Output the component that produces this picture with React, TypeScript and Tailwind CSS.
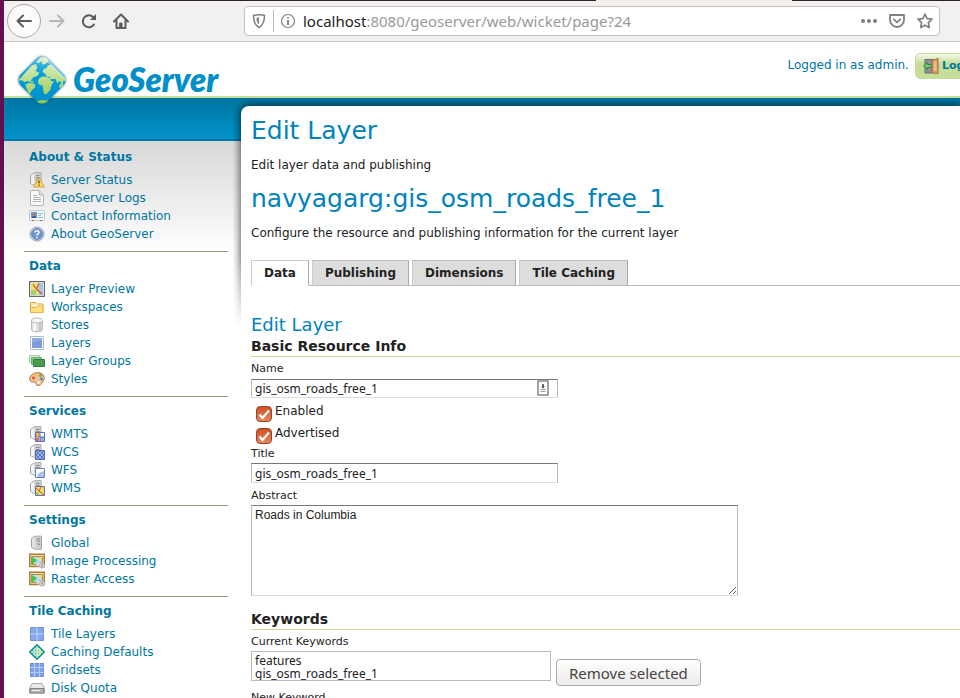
import React from 'react';

const SANS = "font-['DejaVu_Sans',Verdana,sans-serif]";
const UI = "font-['Noto_Sans',sans-serif]";

function Server({ children }: { children?: React.ReactNode }) {
  return (
    <>
      <path d="M1.500 3.500 5.500.7h6.500v12.800H5.500l-4-2z" fill="#e2e2e2" stroke="#a2a2a2" />
      <path d="M5.500 1.200h6v12h-6z" fill="#cdcdcd" />
      <path d="M2 3.800 5 1.700v11L2 11.200z" fill="#f4f4f4" />
      <path d="M7 3.500h3.500M7 5.500h3.500M7 7.500h3.500" stroke="#8d8d8d" />
      {children}
    </>
  );
}

function Picture() {
  return (
    <>
      <path d="M.7 1.200h14.600v12.300H.7z" fill="#f3e3b0" stroke="#a77f38" strokeWidth="1.400" />
      <path d="M2.500 3.500h11v8h-11z" fill="#b7dcf8" stroke="#b08c45" />
      <path d="m3 4 5 3-4 4H3z" fill="#45c63c" />
      <path d="M9 4h4v2.500H9z" fill="#f5d96a" />
      <circle cx="9.500" cy="11" r="2.200" fill="#e3e3e3" stroke="#bdbdbd" />
      <circle cx="13" cy="12.500" r="2.500" fill="#dedede" stroke="#b0b0b0" />
      <circle cx="13" cy="12.500" r="1" fill="#a08a80" />
    </>
  );
}

const glyphs: Record<string, React.ReactNode> = {
  status: (
    <Server>
      <path d="M10 5.500 15.300 15H4.700z" fill="#ffdc68" stroke="#d0a040" strokeLinejoin="round" />
      <path d="M10 8.500v3M10 12.500v1.300" stroke="#6b4a12" strokeWidth="1.400" />
    </Server>
  ),
  logs: (
    <>
      <path d="M1.500.5H10L14.500 5v10.500h-13z" fill="#fafafa" stroke="#b5b5b5" />
      <path d="M10 .5V5h4.500" fill="#ddd" stroke="#b5b5b5" />
      <path d="M4 5.500h4M4 7.500h8M4 9.500h8M4 11.500h8" stroke="#b4b4b4" />
    </>
  ),
  contact: (
    <>
      <path d="M.5 2.500h15v10H.5z" fill="#f4f6f8" stroke="#c4c9ce" />
      <path d="M2 4h6v6H2z" fill="#5f9fe0" />
      <circle cx="5" cy="6.300" r="1.500" fill="#c77a3b" />
      <path d="M3 10c0-3 4-3 4 0z" fill="#2a5cab" />
      <path d="M9.500 5.500H14M9.500 7.500H12M9.500 9.500H14" stroke="#8fb4da" />
      <path d="M3 12.500h2m6 0h2" stroke="#777" />
    </>
  ),
  about: (
    <>
      <circle cx="8" cy="8" r="7" fill="#d5deed" stroke="#94a5c2" />
      <circle cx="8" cy="8" r="5.400" fill="#6f93cb" stroke="#5f83ba" />
      <path d="M6 6.500C6 4 10 4 10 6.500 10 8 8 7.800 8 9.500M8 10.800v1.400" stroke="#fff" strokeWidth="1.500" fill="none" />
    </>
  ),
  preview: (
    <>
      <path d="M.6.6h14.800v14.800H.6z" fill="#fff" stroke="#5d6b62" strokeWidth="1.200" />
      <path d="M2 2h12v12H2z" fill="#f2df78" />
      <path d="M9.500 2H14v12H9.500z" fill="#a4c6ea" />
      <path d="M2 9h5v5H2z" fill="#9fd06a" />
      <path d="m4 3 3.500 5L13 13M7.500 8 10 2.500" stroke="#d9532a" strokeWidth="1.200" fill="none" />
    </>
  ),
  folder: (
    <>
      <path d="M1.500 13.500v-10h5l1 1.500h6.500v8.500z" fill="#fbe7a2" stroke="#dfa83f" />
      <path d="M3 6.500h10" stroke="#fffbe6" strokeWidth="1.500" />
      <path d="M1.500 13.500v-5h6l1-1.500H14v6.500z" fill="#ffe07a" stroke="#e5b14c" />
    </>
  ),
  store: (
    <>
      <path d="M2.500 3.500v9c0 3 11 3 11 0v-9" fill="#dedede" stroke="#b8b8b8" />
      <path d="M4.500 5v9h2.500V5" fill="#fafafa" />
      <path d="M10 5v9h2V5" fill="#c4c4c4" />
      <ellipse cx="8" cy="3.500" rx="5.500" ry="2.500" fill="#f6f6f6" stroke="#bcbcbc" />
    </>
  ),
  layer: (
    <>
      <path d="M1.500 1.500h13v13h-13z" fill="#fff" stroke="#a9bce0" />
      <path d="M3 3h10v10H3z" fill="#8dabe2" />
      <path d="M3 13V8l10-3v8z" fill="#7b9cd8" />
    </>
  ),
  group: (
    <>
      <path d="M.5 2.500h10v7H.5z" fill="#d4ebd4" stroke="#a8cfa9" />
      <path d="M2.500 4.500h10v7h-10z" fill="#8cc78f" stroke="#6db171" />
      <path d="M4.500 6.500h11v7h-11z" fill="#4a9a51" stroke="#347c3c" />
    </>
  ),
  styles: (
    <>
      <path d="M1 6C4 0 14 .500 15 5.500c1 4-3 9-6 9-3 0-1-4-4-3.500C1 11.500 0 9 1 6z" fill="#f0c295" stroke="#b5733f" />
      <circle cx="4.500" cy="7" r="1.400" fill="#e0432c" />
      <circle cx="7.500" cy="4" r="1.400" fill="#f1c13a" />
      <circle cx="11.500" cy="4.500" r="1.400" fill="#55b24a" />
      <circle cx="12.500" cy="8" r="1.400" fill="#4a86d0" />
      <circle cx="9.500" cy="11.500" r="1.300" fill="#fff" />
    </>
  ),
  wmts: (
    <Server>
      <path d="M6.500 6.500h9v9h-9z" fill="#fff" stroke="#5c6fae" />
      <path d="M7 7h4v4H7z" fill="#f1b44a" />
      <path d="M11 11h4v4h-4z" fill="#8faee5" />
      <path d="M7 12h3v3H7z" fill="#e07152" />
      <path d="M11 7v8M7 11h8" stroke="#5c6fae" />
    </Server>
  ),
  wcs: (
    <Server>
      <path d="M6.500 6.500h9v9h-9z" fill="#9db5ea" stroke="#5268b4" />
      <path d="m7 7 8 8M11 7l4 4M7 11l4 4M15 7l-8 8M11 7l-4 4M15 11l-4 4" stroke="#4a66b8" strokeWidth=".8" />
    </Server>
  ),
  wfs: (
    <Server>
      <path d="M6.500 6.500h9v9h-9z" fill="#fff" stroke="#6a80c0" />
      <path d="M8 15c1-4 3-5 7-6v6z" fill="#a9c3ee" />
    </Server>
  ),
  wms: (
    <Server>
      <path d="M6.500 6.500h9v9h-9z" fill="#f3dc70" stroke="#6a6fb0" />
      <path d="M7 12h3v3H7z" fill="#a3cf6c" />
      <path d="m7 8 3 3 5 4M10 11l2-4" stroke="#d4502a" fill="none" />
    </Server>
  ),
  server: (
    <>
      <path d="M2.500 3.500 6 1.200h6.500v13H6l-3.500-2z" fill="#e2e2e2" stroke="#a2a2a2" />
      <path d="M6.500 1.700H12v12H6.500z" fill="#cdcdcd" />
      <path d="M7.500 4h3.500M7.500 6h3.500" stroke="#8d8d8d" />
      <path d="M9 8.500h1.500V10H9z" fill="#36a63c" />
    </>
  ),
  picture: <Picture />,
  tiles: (
    <>
      <path d="M1 1h14v14H1z" fill="#86a8ea" />
      <path d="M1.500 1.500h13v13h-13z" stroke="#7294d8" fill="none" />
      <path d="M8 1v14M1 8h14" stroke="#bed1f8" />
    </>
  ),
  defaults: (
    <>
      <path d="m8 .7 7.300 7.300L8 15.300.7 8z" fill="#4dbfae" stroke="#168a86" strokeWidth="1.400" strokeLinejoin="round" />
      <path d="M8 2.500 13.500 8 8 13.500z" fill="#9ed27a" />
      <path d="M8 2v12M2 8h12M5 5v6M11 5v6M5 5h6M5 11h6" stroke="#e6f7e2" />
    </>
  ),
  grid: (
    <>
      <path d="M1 1h14v14H1z" fill="#7fa2e6" />
      <path d="M1.500 1.500h13v13h-13z" stroke="#6d90d6" fill="none" />
      <path d="M5.500 1v14M10.500 1v14M1 5.500h14M1 10.500h14" stroke="#b5cbf6" />
    </>
  ),
  disk: (
    <>
      <path d="M3 3.500h10l2.500 5V13H.5V8.500z" fill="#e9e9e9" stroke="#ababab" strokeLinejoin="round" />
      <path d="M1 8.500h14V13H1z" fill="#b3b3b3" stroke="#828282" />
      <path d="M3 10.500h8" stroke="#eee" />
    </>
  ),
};

function Glyph({ name }: { name: string }) {
  return (
    <svg viewBox="0 0 16 16" fill="none" className="size-4 shrink-0" aria-hidden="true">
      {glyphs[name]}
    </svg>
  );
}

const menu: { title: string; items: [string, string][] }[] = [
  { title: 'About & Status', items: [['status', 'Server Status'], ['logs', 'GeoServer Logs'], ['contact', 'Contact Information'], ['about', 'About GeoServer']] },
  { title: 'Data', items: [['preview', 'Layer Preview'], ['folder', 'Workspaces'], ['store', 'Stores'], ['layer', 'Layers'], ['group', 'Layer Groups'], ['styles', 'Styles']] },
  { title: 'Services', items: [['wmts', 'WMTS'], ['wcs', 'WCS'], ['wfs', 'WFS'], ['wms', 'WMS']] },
  { title: 'Settings', items: [['server', 'Global'], ['picture', 'Image Processing'], ['picture', 'Raster Access']] },
  { title: 'Tile Caching', items: [['tiles', 'Tile Layers'], ['defaults', 'Caching Defaults'], ['grid', 'Gridsets'], ['disk', 'Disk Quota']] },
];

function BrowserBar() {
  return (
    <div className={`shrink-0 bg-[#f3f1f0] ${UI}`}>
      <div className="flex h-px">
        <span className="w-[592px] bg-[#2c2528]" />
        <span className="w-[196px]" />
        <span className="flex-1 bg-[#2c2528]" />
      </div>
      <div className="flex h-[41px] items-center border-b border-[#c9c5c2] pr-5">
        <button aria-label="Back" className="ml-[3px] flex size-[34px] items-center justify-center rounded-full border border-[#adaaa8] bg-[#fbfbfb]">
          <svg viewBox="0 0 16 16" className="size-4" fill="none" stroke="#5b5b5b" strokeWidth="2" strokeLinecap="round" strokeLinejoin="round"><path d="M15 8H1.500M7 2.500 1.500 8 7 13.500" /></svg>
        </button>
        <button aria-label="Forward" className="ml-2 flex size-4 items-center justify-center">
          <svg viewBox="0 0 16 16" className="size-4" fill="none" stroke="#b9b7b6" strokeWidth="2" strokeLinecap="round" strokeLinejoin="round"><path d="M1 8h13.500M9 2.500 14.500 8 9 13.500" /></svg>
        </button>
        <button aria-label="Reload" className="ml-4 size-4">
          <svg viewBox="0 0 16 16" className="size-4" fill="none" stroke="#5b5b5b" strokeWidth="2" strokeLinecap="round"><path d="M13 11.500A6 6 0 1 1 12.500 4.500" /><path d="M15 1v6H9z" fill="#5b5b5b" stroke="none" /></svg>
        </button>
        <button aria-label="Home" className="ml-4 size-4">
          <svg viewBox="0 0 16 16" className="size-4" fill="none" stroke="#5b5b5b" strokeWidth="2" strokeLinecap="round" strokeLinejoin="round"><path d="M1 8.500 8 1.500l7 7M3.500 7.500V15h9V7.500" /><path d="M7 10h2v4H7z" strokeWidth="1" fill="#5b5b5b" /></svg>
        </button>
        <div className="ml-[115px] flex h-[30px] min-w-0 flex-1 items-center rounded border border-[#c6c1bd] bg-white px-1.5">
          <svg viewBox="0 0 16 16" className="size-4 shrink-0" fill="none" stroke="#808080" strokeWidth="1.500"><path d="M2.500 2.500 8 1.500l5.500 1c0 5.500-1 9.500-5.500 12-4.500-2.500-5.500-6.500-5.500-12z" /><path d="M8 4.500c-1 0-2 .3-2.500.5 0 3 .5 5 2.500 6.500z" fill="#808080" stroke="none" /></svg>
          <span className="mx-[6px] h-[22px] w-px bg-[#bbb]" />
          <svg viewBox="0 0 16 16" className="size-4 shrink-0" fill="none" stroke="#808080"><circle cx="8" cy="8" r="6.500" strokeWidth="1.200" /><path d="M8 7v5M8 4v1.500" strokeWidth="1.800" /></svg>
          <span className="ml-[7px] min-w-0 flex-1 truncate text-[15px] text-[#999]"><span className="text-[#222]">localhost</span>:8080/geoserver/web/wicket/page?24</span>
          <button aria-label="Page actions" className="size-4">
            <svg viewBox="0 0 16 16" className="size-4" fill="#808080"><circle cx="2" cy="8" r="2" /><circle cx="8" cy="8" r="2" /><circle cx="14" cy="8" r="2" /></svg>
          </button>
          <button aria-label="Save to Pocket" className="ml-3 size-4">
            <svg viewBox="0 0 16 16" className="size-4" fill="none" stroke="#808080" strokeWidth="1.800" strokeLinejoin="round" strokeLinecap="round"><path d="M1 2h14v5a7 7 0 0 1-14 0zM4.800 6.300 8 9.300l3.200-3" /></svg>
          </button>
          <button aria-label="Bookmark" className="ml-3 size-4">
            <svg viewBox="0 0 16 16" className="size-4" fill="none" stroke="#808080" strokeWidth="1.700" strokeLinejoin="round"><path d="m8 1 2.100 4.600 4.900.6-3.600 3.400.9 5L8 12.200l-4.300 2.400.9-5L1 6.200l4.900-.6z" /></svg>
          </button>
        </div>
      </div>
    </div>
  );
}

function Logo() {
  return (
    <svg viewBox="0 0 208 56" className="h-14 w-[208px]" role="img" aria-label="GeoServer">
      <defs>
        <linearGradient id="sea" x1="0" y1="0" x2="1" y2="1"><stop offset="0" stopColor="#5cc0e4" /><stop offset=".4" stopColor="#05a0da" /><stop offset="1" stopColor="#008bc6" /></linearGradient>
        <linearGradient id="land" gradientUnits="userSpaceOnUse" x1="0" y1="30" x2="0" y2="175"><stop offset="0" stopColor="#e3f3d4" /><stop offset="1" stopColor="#93c63f" /></linearGradient>
        <clipPath id="gem"><rect x="7" y="10" width="38" height="38" rx="8" transform="rotate(45 26 29)" /></clipPath>
        <filter id="soft" x="-20%" y="-20%" width="140%" height="140%"><feDropShadow dx="0" dy="0" stdDeviation="1.300" floodColor="#222" floodOpacity=".7" /></filter>
      </defs>
      <rect x="7" y="10" width="38" height="38" rx="8" transform="rotate(45 26 29)" fill="url(#sea)" filter="url(#soft)" />
      <g clipPath="url(#gem)">
        <g fill="url(#land)" transform="translate(-6 -5) scale(.3333)">
          <path d="M24 104 66 58l12-4 4 12-6 8 12 6-6 10-12 4-8 10 10 3-4 3-16-5-8 4-8-6z" />
          <path d="m46 116 10-6 18 3 2 10-10 10-8 12-6-12z" />
          <path d="m78 48 14-14 14 0 10 10-6 8-12 4-4-10-8 6z" />
          <path d="m98 78 2-8 10-4 4-8 10-2 42 42 2 8-8-2-3 14-7-14-8 8-6-14-12 2-6-8-8 0-4-8z" />
          <path d="m88 96 12-5 14 3 6 2 4 10 8-1-8 14-3 12-10 12-8 2-4-16-1-10-12-4-2-10z" />
          <path d="m148 116 12-6-2 12-10 4zM80 166l16-4 22 2-12 12H90z" />
        </g>
        <path d="M26 4 51 29" stroke="#fff" strokeOpacity=".4" strokeWidth="2.500" />
      </g>
      <text x="57" y="41" fill="#008fc9" fontFamily="Lato, sans-serif" fontSize="33" fontWeight="800" fontStyle="italic">GeoServer</text>
    </svg>
  );
}

function Door() {
  return (
    <svg viewBox="0 0 16 16" className="size-4" aria-hidden="true">
      <path d="M2 1.500h8V15H2z" fill="#8d9296" stroke="#6a6e72" />
      <path d="m9 2.500 6-2V16l-6-1.500z" fill="#dca166" stroke="#a8682c" />
      <path d="M11 3.500 13.500 3v10l-2.500-.5z" fill="#e9bd8c" />
      <path d="m.5 8 4-3.500v2h4v3h-4v2z" fill="#6fc66c" stroke="#2d7b35" strokeWidth=".8" />
    </svg>
  );
}

const field = 'block border border-t-[#777] border-x-[#bbb] border-b-[#ddd] bg-white px-[3px] text-[#222] outline-none';

function Check({ label }: { label: string }) {
  return (
    <label className="flex h-[22px] w-fit items-start gap-[3px] pl-[5px] text-xs leading-4">
      <span className="mt-[3px] grid size-4">
        <input type="checkbox" defaultChecked className="col-start-1 row-start-1 size-4 appearance-none rounded-[4px] border border-[#9a452a] bg-linear-to-b from-[#cf4f22] to-[#e5855d]" />
        <svg viewBox="0 0 16 16" className="pointer-events-none col-start-1 row-start-1 size-4" fill="none" stroke="#fff" strokeWidth="2.200"><path d="m3.500 8.500 3 3.500L13 4.500" /></svg>
      </span>
      {label}
    </label>
  );
}

export default function App() {
  return (
    <div className={`flex h-screen overflow-hidden border-l-4 border-[#650f50] bg-white text-xs text-[#222] ${SANS}`}>
      <div className="flex min-w-0 flex-1 flex-col">
        <BrowserBar />
        <header className="flex h-14 shrink-0 justify-between border-b-2 border-[#c5de99] whitespace-nowrap">
          <a href="#home" className="relative z-10 mt-[9px] ml-3 h-14"><Logo /></a>
          <div className="-mr-[33px] flex items-start gap-1.5 pt-[11px]">
            <span className="pt-1 leading-4 text-[#0076a1]">Logged in as admin.</span>
            <button className="flex h-[26px] items-center gap-[3px] rounded-[5px] border border-[#c5de99] bg-linear-to-b from-[#f5faeb] to-[#c5de99] to-40% px-[7px] text-[11px] font-bold text-[#0076a1]"><Door />Logout</button>
          </div>
        </header>
        <div className="flex min-h-0 flex-1 items-start bg-[linear-gradient(#0076a1,#0092cb),linear-gradient(#0076a1,#0076a1),linear-gradient(#d8d8d8,#fff)] bg-[length:100%_41px,100%_43px,100%_112px] bg-[position:0_0,0_0,0_43px] bg-no-repeat">
          <aside className="w-[237px] shrink-0 px-5 pt-[43px] pr-[13px]">
            <nav className="pt-[7px]">
              {menu.map((group, g) => (
                <section key={group.title} className={g === 0 ? 'pb-2' : 'border-t border-[#92a07a] pt-[5px] pb-2'}>
                  <h2 className="pl-[5px] leading-[18px] font-bold text-[#0076a1]">{group.title}</h2>
                  <ul className="pt-[5px] pl-[5px]">
                    {group.items.map(([icon, text]) => (
                      <li key={text} className="h-[18px]">
                        <a href="#menu" className="flex items-center gap-1.5 leading-[18px] text-[#0076a1]"><Glyph name={icon} />{text}</a>
                      </li>
                    ))}
                  </ul>
                </section>
              ))}
            </nav>
          </aside>
          <div className="relative mt-2 min-w-0 flex-1">
            <div className="absolute -top-2 right-0 -left-2 h-[228px] overflow-hidden pt-2 pl-2 [mask-image:linear-gradient(#000_70%,transparent)]">
              <div className="h-[300px] rounded-tl-lg shadow-[0_0_8px_1px_#000a]" />
            </div>
            <main className="relative rounded-tl-lg bg-white pt-[9px] pl-[10px]">
              <h1 className="text-[25px] leading-8 text-[#0083bc]">Edit Layer</h1>
              <p className="pt-[10px] leading-4">Edit layer data and publishing</p>
              <h1 className="pt-[10px] text-[25px] leading-8 text-[#0083bc]">navyagarg:gis_osm_roads_free_1</h1>
              <p className="pt-[10px] leading-4">Configure the resource and publishing information for the current layer</p>
              <div role="tablist" className="mt-[19px] flex">
                {['Data', 'Publishing', 'Dimensions', 'Tile Caching'].map((tab, i) => (
                  <React.Fragment key={tab}>
                    <button role="tab" aria-selected={i === 0} className={i === 0 ? 'h-[26px] border border-r-[#aaa] border-b-white border-l-[#ccc] border-t-[#ccc] bg-white px-3 font-bold' : 'h-[26px] border border-t-[#bbb] border-l-[#ccc] border-r-[#aaa] border-b-[#bbb] bg-[#ddd] px-3 font-bold'}>{tab}</button>
                    <span className={i === 3 ? 'flex-1 border-b border-[#bbb]' : 'w-[3px] border-b border-[#bbb]'} />
                  </React.Fragment>
                ))}
              </div>
              <h2 className="pt-7 text-lg leading-[22px] text-[#0083bc]">Edit Layer</h2>
              <h3 className="border-b border-[#c5de99] text-sm leading-5 font-bold">Basic Resource Info</h3>
              <label htmlFor="name" className="block pt-1 text-[11px] leading-4">Name</label>
              <div className="mt-[2px] grid w-[307px]">
                <input id="name" defaultValue="gis_osm_roads_free_1" className={`col-start-1 row-start-1 h-[19px] w-full text-xs ${field} ${UI}`} />
                <svg viewBox="0 0 12 16" className="pointer-events-none col-start-1 row-start-1 mt-px mr-[9px] h-4 w-3 justify-self-end" fill="none"><path d="M1 1h10v14H1z" fill="#fff" stroke="#888" strokeWidth="1.500" /><path d="m6 4 1 3.500H5z" fill="#555" stroke="#555" /><path d="M3.500 9.500h5M3.500 11.500h5" stroke="#999" /></svg>
              </div>
              <div className="pt-[5px]"><Check label="Enabled" /><Check label="Advertised" /></div>
              <label htmlFor="title" className="block text-[11px] leading-[14px]">Title</label>
              <input id="title" defaultValue="gis_osm_roads_free_1" className={`mt-[2px] h-5 w-[307px] text-xs ${field} ${UI}`} />
              <label htmlFor="abstract" className="block pt-1.5 text-[11px] leading-[14px]">Abstract</label>
              <textarea id="abstract" defaultValue="Roads in Columbia" className={`mt-[2px] h-[91px] w-[487px] resize pt-px font-['Liberation_Sans',Arial,sans-serif] text-xs leading-4 ${field}`} />
              <h3 className="mt-[13px] border-b border-[#c5de99] text-sm leading-5 font-bold">Keywords</h3>
              <label htmlFor="keywords" className="block pt-1 text-[11px] leading-4">Current Keywords</label>
              <div className="mt-px flex items-start gap-[5px]">
                <select id="keywords" multiple size={2} className={`h-[30px] w-[300px] overflow-hidden border border-[#bbb] bg-white text-xs outline-none ${UI}`}>
                  <option className="h-[13px] min-h-0 px-[3px] py-0 leading-[13px]">features</option>
                  <option className="h-[13px] min-h-0 px-[3px] py-0 leading-[13px]">gis_osm_roads_free_1</option>
                </select>
                <button className={`mt-2 h-[27px] rounded border border-[#aaa] bg-linear-to-b from-white to-[#edebe9] px-3 text-[15px] text-[#444] ${UI}`}>Remove selected</button>
              </div>
              <label htmlFor="new-keyword" className="block pt-1 text-[11px] leading-4">New Keyword</label>
              <input id="new-keyword" className={`mt-[2px] h-5 w-[307px] text-xs ${field}`} />
            </main>
          </div>
        </div>
      </div>
    </div>
  );
}
